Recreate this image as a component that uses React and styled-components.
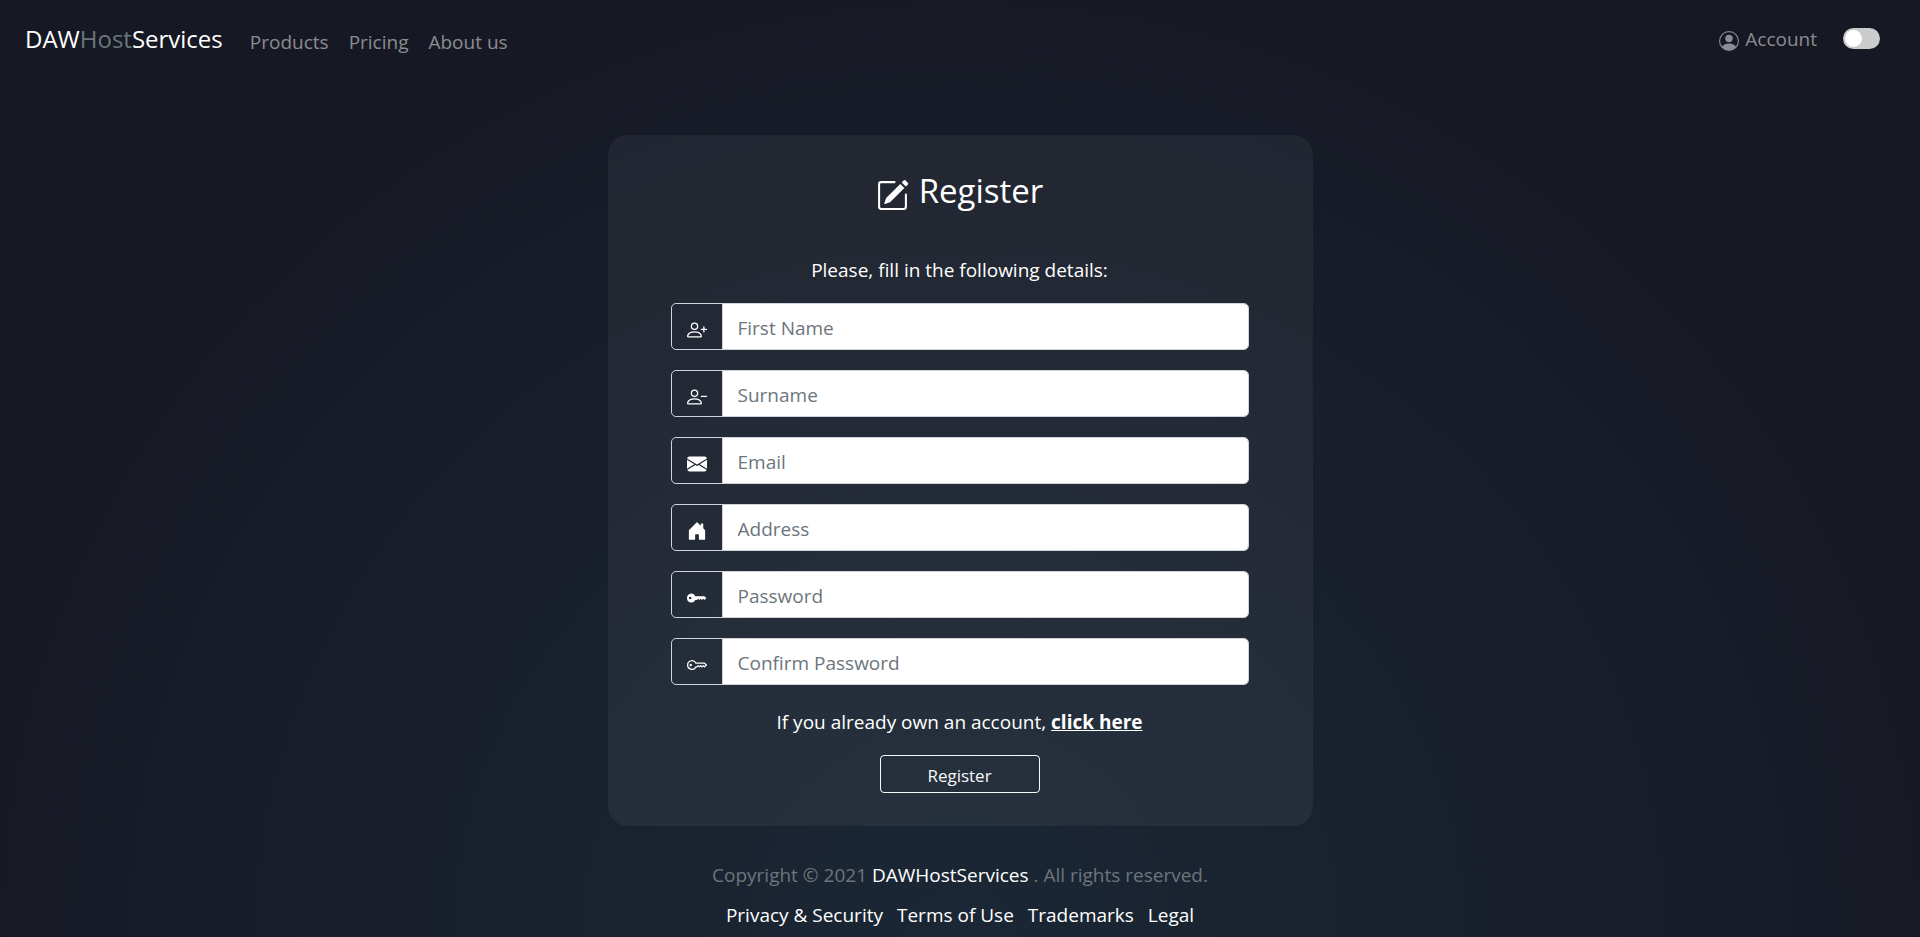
import React from "react";
import styled, { createGlobalStyle } from "styled-components";
import {
  BsPersonCircle,
  BsPencilSquare,
  BsPersonPlus,
  BsEnvelopeFill,
  BsHouseDoorFill,
  BsKeyFill,
  BsKey,
} from "react-icons/bs";

const GlobalStyle = createGlobalStyle`
  *, *::before, *::after { box-sizing: border-box; }
  body {
    margin: 0;
    background: #161823;
    color: #fff;
    font-family: "Segoe UI", "Open Sans", "Noto Sans", sans-serif;
    font-size: 19px;
    line-height: 30px;
  }
`;

const Page = styled.div`
  min-height: 100vh;
  display: flex;
  flex-direction: column;
  background: radial-gradient(ellipse at bottom, #1b2735 0%, #161823 80%);
`;

const Navbar = styled.nav`
  display: flex;
  align-items: center;
  padding: 20px 40px 22px 25px;
  height: 80px;
`;

const Brand = styled.a`
  color: #fff;
  font-size: 24px;
  text-decoration: none;
  margin-right: 27px;
`;

const Muted = styled.span`
  color: #6c757d;
`;

const NavLinks = styled.div`
  display: flex;
  gap: 20px;
  flex: 1;
  padding-top: 6px;
`;

const NavLink = styled.a`
  display: flex;
  align-items: center;
  gap: 6px;
  color: rgba(255, 255, 255, 0.5);
  text-decoration: none;

  svg { margin-top: 4px; }
`;

const Switch = styled.input`
  appearance: none;
  width: 37px;
  height: 21px;
  margin: 0 0 2px 26px;
  padding: 2px;
  border-radius: 11px;
  background: #ccc;
  cursor: pointer;

  &::before {
    content: "";
    display: block;
    width: 17px;
    height: 17px;
    border-radius: 50%;
    background: #fff;
  }
  &:checked::before {
    margin-left: auto;
  }
`;

const Card = styled.form`
  width: calc(100% - 32px);
  max-width: 705px;
  margin: 55px auto 0;
  padding: 32px 64px 33px 63px;
  border-radius: 20px;
  background: rgba(255, 255, 255, 0.05);
  display: flex;
  flex-direction: column;
  align-items: center;
`;

const Title = styled.h1`
  display: flex;
  align-items: center;
  gap: 10px;
  margin: 0;
  font-size: 33px;
  line-height: 48px;
  font-weight: 400;

  svg { margin-top: 8px; }
`;

const Lead = styled.p`
  margin: 40px 0 18px;
`;

const Fields = styled.div`
  display: flex;
  flex-direction: column;
  gap: 20px;
  width: 100%;
`;

const Group = styled.div`
  display: flex;
  height: 47px;
  border: 1px solid #ced4da;
  border-radius: 5px;
  overflow: hidden;
`;

const Addon = styled.label`
  display: flex;
  align-items: center;
  justify-content: center;
  width: 51px;
  padding-top: 6px;
  border-right: 1px solid #ced4da;
`;

const Input = styled.input`
  flex: 1;
  min-width: 0;
  padding: 2px 15px 0;
  border: 0;
  background: #fff;
  color: #212529;
  font: inherit;

  &::placeholder { color: #6c757d; opacity: 1; }
`;

const Hint = styled.p`
  margin: 22px 0 18px;
`;

const HintLink = styled.a`
  color: #fff;
  font-weight: 700;
`;

const Submit = styled.button`
  width: 160px;
  height: 38px;
  padding: 3px 0 0;
  border: 1px solid #f8f9fa;
  border-radius: 4px;
  background: transparent;
  color: #f8f9fa;
  font: inherit;
  font-size: 17px;
`;

const Footer = styled.footer`
  display: flex;
  flex-direction: column;
  align-items: center;
  gap: 10px;
  margin-top: 34px;
  padding-bottom: 7px;
  color: #6c757d;
`;

const Copyright = styled.p`
  margin: 0;
`;

const FooterLinks = styled.div`
  display: flex;
  gap: 14px;
`;

const FooterLink = styled.a`
  color: #fff;
  text-decoration: none;
`;

function PersonDash({ size }) {
  return (
    <svg width={size} height={size} viewBox="0 0 16 16" fill="currentColor" aria-hidden="true">
      <path
        fillRule="evenodd"
        d="M6 8a3 3 0 1 0 0-6 3 3 0 0 0 0 6zm2-3a2 2 0 1 1-4 0 2 2 0 0 1 4 0zm4 8c0 1-1 1-1 1H1s-1 0-1-1 1-4 6-4 6 3 6 4zm-1-.004c-.001-.246-.154-.986-.832-1.664C9.516 10.68 8.289 10 6 10c-2.29 0-3.516.68-4.168 1.332-.678.678-.83 1.418-.832 1.664h10z"
      />
      <path d="M11 7.5a.5.5 0 0 1 .5-.5h4a.5.5 0 0 1 0 1h-4a.5.5 0 0 1-.5-.5z" />
    </svg>
  );
}

const fields = [
  { id: "first-name", label: "First Name", type: "text", Icon: BsPersonPlus },
  { id: "surname", label: "Surname", type: "text", Icon: PersonDash },
  { id: "email", label: "Email", type: "email", Icon: BsEnvelopeFill },
  { id: "address", label: "Address", type: "text", Icon: BsHouseDoorFill },
  { id: "password", label: "Password", type: "password", Icon: BsKeyFill },
  { id: "confirm", label: "Confirm Password", type: "password", Icon: BsKey },
];

export default function App() {
  return (
    <Page>
      <GlobalStyle />
      <Navbar>
        <Brand href="#">
          DAW<Muted>Host</Muted>Services
        </Brand>
        <NavLinks>
          <NavLink href="#products">Products</NavLink>
          <NavLink href="#pricing">Pricing</NavLink>
          <NavLink href="#about">About us</NavLink>
        </NavLinks>
        <NavLink href="#account">
          <BsPersonCircle size={20} />
          Account
        </NavLink>
        <Switch type="checkbox" role="switch" aria-label="Toggle theme" />
      </Navbar>

      <Card>
        <Title>
          <BsPencilSquare size={33} />
          Register
        </Title>
        <Lead>Please, fill in the following details:</Lead>
        <Fields>
          {fields.map(({ id, label, type, Icon }) => (
            <Group key={id}>
              <Addon htmlFor={id} aria-label={label}>
                <Icon size={20} />
              </Addon>
              <Input id={id} type={type} placeholder={label} />
            </Group>
          ))}
        </Fields>
        <Hint>
          If you already own an account, <HintLink href="#login">click here</HintLink>
        </Hint>
        <Submit type="submit">Register</Submit>
      </Card>

      <Footer>
        <Copyright>
          Copyright © 2021 <FooterLink href="#">DAWHostServices</FooterLink> . All rights reserved.
        </Copyright>
        <FooterLinks>
          <FooterLink href="#privacy">Privacy &amp; Security</FooterLink>
          <FooterLink href="#terms">Terms of Use</FooterLink>
          <FooterLink href="#trademarks">Trademarks</FooterLink>
          <FooterLink href="#legal">Legal</FooterLink>
        </FooterLinks>
      </Footer>
    </Page>
  );
}
